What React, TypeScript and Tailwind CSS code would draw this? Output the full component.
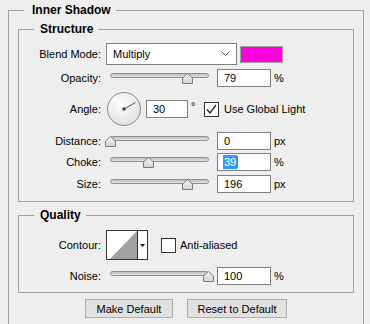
import type { ReactNode } from "react";

const LABEL = "w-[82px] shrink-0 text-right text-[11px] leading-[14px] text-black";

function Label({ children }: { children: ReactNode }) {
  return <span className={LABEL}>{children}</span>;
}

function NumBox({
  value,
  width = 54,
  selected = false,
}: {
  value: string;
  width?: number;
  selected?: boolean;
}) {
  return (
    <div
      className="flex h-[18px] shrink-0 items-center border border-[#7f7f7f] bg-white pl-[5px] text-[11px] leading-[14px] text-black"
      style={{ width }}
    >
      {selected ? (
        <>
          <span className="bg-[#3399ff] px-[1px] text-white">{value}</span>
          <span className="h-[12px] w-[1px] bg-[#c46a1e]" />
        </>
      ) : (
        <span className="pl-[1px]">{value}</span>
      )}
    </div>
  );
}

function SliderBar({ value, max = 100 }: { value: number; max?: number }) {
  const center = 5 + (value / max) * 98;
  return (
    <div className="relative ml-[4px] h-[18px] w-[109px] shrink-0">
      <div className="absolute left-[5px] right-[5px] top-[4px] h-[5px] rounded-full border border-[#8e8e8e] bg-gradient-to-b from-[#bdbdbd] to-[#e4e4e4]" />
      <svg
        className="absolute top-[4px]"
        style={{ left: Math.round(center - 5) }}
        width="11"
        height="11"
        viewBox="0 0 11 11"
      >
        <defs>
          <linearGradient id="thumb" x1="0" y1="0" x2="0" y2="1">
            <stop offset="0" stopColor="#f4f4f4" />
            <stop offset="1" stopColor="#d2d2d2" />
          </linearGradient>
        </defs>
        <path
          d="M5.5 0.5 L10.5 5 L10.5 10.5 L0.5 10.5 L0.5 5 Z"
          fill="url(#thumb)"
          stroke="#7a7a7a"
          strokeWidth="1"
        />
      </svg>
    </div>
  );
}

function SliderRow({
  label,
  value,
  max,
  text,
  unit,
  selected,
  className,
}: {
  label: string;
  value: number;
  max?: number;
  text: string;
  unit: string;
  selected?: boolean;
  className: string;
}) {
  return (
    <div className={`flex h-[18px] items-center ${className}`}>
      <Label>{label}</Label>
      <SliderBar value={value} max={max} />
      <div className="ml-[3px]">
        <NumBox value={text} selected={selected} />
      </div>
      <span className="ml-[3px] text-[11px] leading-[14px] text-black">{unit}</span>
    </div>
  );
}

function Checkbox({ checked }: { checked: boolean }) {
  return (
    <div className="flex h-[15px] w-[15px] shrink-0 items-center justify-center border border-[#333333] bg-white">
      {checked && (
        <svg width="13" height="13" viewBox="0 0 13 13">
          <path d="M2 6.5 L5 10 L11 2" fill="none" stroke="#222222" strokeWidth="1.3" />
        </svg>
      )}
    </div>
  );
}

function Group({
  title,
  children,
  className,
}: {
  title: string;
  children: ReactNode;
  className: string;
}) {
  return (
    <fieldset className={`border border-[#a2a2a2] ${className}`}>
      <legend className="ml-[15px] pl-[6px] pr-[5px] text-[12px] font-bold leading-[14px] text-black">
        {title}
      </legend>
      {children}
    </fieldset>
  );
}

export default function App() {
  return (
    <div className="h-[324px] overflow-hidden bg-[#eeeeee] pt-[3px] font-['Liberation_Sans',Arial,sans-serif]">
      <fieldset className="ml-[8px] w-[356px] border border-b-0 border-[#a2a2a2] px-[9px] pb-[20px]">
        <legend className="ml-[6px] pl-[8px] pr-[5px] text-[12px] font-bold leading-[14px] text-black">
          Inner Shadow
        </legend>

        <Group title="Structure" className="mt-[5px] pb-[8px]">
          <div className="mt-[7px] flex h-[22px] items-center">
            <Label>Blend Mode:</Label>
            <div className="ml-[5px] flex h-[22px] w-[131px] items-center justify-between border border-[#7f7f7f] bg-white pl-[6px] pr-[6px] text-[11px] text-black">
              <span>Multiply</span>
              <svg width="9" height="6" viewBox="0 0 9 6">
                <path d="M0.5 0.5 L4.5 4.5 L8.5 0.5" fill="none" stroke="#555555" strokeWidth="1" />
              </svg>
            </div>
            <div className="ml-[3px] h-[17px] w-[43px] border border-[#a0a0a0] bg-[#ff00dc]" />
          </div>

          <SliderRow label="Opacity:" value={79} text="79" unit="%" className="mt-[4px]" />

          <div className="mt-[5px] flex h-[34px] items-center">
            <Label>Angle:</Label>
            <svg className="ml-[6px] shrink-0" width="34" height="34" viewBox="0 0 34 34">
              <defs>
                <radialGradient id="dial" cx="0.4" cy="0.35" r="0.7">
                  <stop offset="0" stopColor="#ffffff" />
                  <stop offset="1" stopColor="#dedede" />
                </radialGradient>
              </defs>
              <circle cx="17" cy="17" r="16.5" fill="url(#dial)" stroke="#8a8a8a" />
              <line x1="17" y1="17" x2="28.5" y2="10.5" stroke="#555555" strokeWidth="1" />
              <circle cx="17" cy="17" r="1.8" fill="#444444" />
            </svg>
            <div className="ml-[5px]">
              <NumBox value="30" width={42} />
            </div>
            <span className="ml-[3px] w-[13px] self-start pt-[8px] text-[11px] leading-[12px] text-black">
              °
            </span>
            <Checkbox checked />
            <span className="ml-[5px] text-[11px] leading-[14px] text-black">Use Global Light</span>
          </div>

          <SliderRow label="Distance:" value={0} text="0" unit="px" className="mt-[6px]" />
          <SliderRow label="Choke:" value={39} text="39" unit="%" selected className="mt-[3px]" />
          <SliderRow label="Size:" value={196} max={250} text="196" unit="px" className="mt-[4px]" />
        </Group>

        <Group title="Quality" className="mt-[6px] pb-[7px]">
          <div className="mt-[8px] flex h-[30px] items-center">
            <Label>Contour:</Label>
            <div className="ml-[5px] flex h-[30px] w-[42px] shrink-0 border border-[#333333] bg-white">
              <svg width="30" height="28" viewBox="0 0 30 28" className="shrink-0">
                <polygon points="3,28 30,0 30,28" fill="#a0a0a0" />
              </svg>
              <div className="flex flex-1 items-center justify-center border-l border-[#333333]">
                <svg width="5" height="3" viewBox="0 0 5 3">
                  <polygon points="0,0 5,0 2.5,3" fill="#111111" />
                </svg>
              </div>
            </div>
            <div className="ml-[13px]">
              <Checkbox checked={false} />
            </div>
            <span className="ml-[4px] text-[11px] leading-[14px] text-black">Anti-aliased</span>
          </div>

          <SliderRow label="Noise:" value={100} text="100" unit="%" className="mt-[7px]" />
        </Group>

        <div className="mt-[6px] flex justify-center gap-[14px]">
          <button className="h-[19px] w-[88px] border border-[#adadad] bg-[#e1e1e1] text-[11px] leading-[14px] text-black">
            Make Default
          </button>
          <button className="h-[19px] w-[100px] border border-[#adadad] bg-[#e1e1e1] text-[11px] leading-[14px] text-black">
            Reset to Default
          </button>
        </div>
      </fieldset>
    </div>
  );
}
